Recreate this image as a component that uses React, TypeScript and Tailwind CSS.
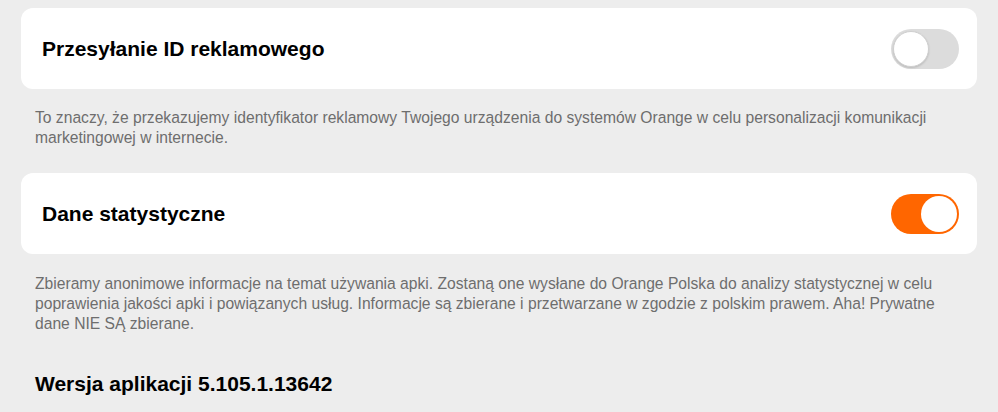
import React from "react"

function Toggle({ on }: { on: boolean }) {
  return on ? (
    <div className="flex h-[40px] w-[68px] items-center justify-end rounded-full bg-[#ff6600] p-[2px]">
      <div className="h-[36px] w-[36px] rounded-full bg-white" />
    </div>
  ) : (
    <div className="flex h-[40px] w-[68px] items-center rounded-full bg-[#dcdcdc] p-[2px]">
      <div className="h-[36px] w-[36px] rounded-full border border-[#cfcfcf] bg-white shadow-[0_1px_2px_rgba(0,0,0,0.15)]" />
    </div>
  )
}

function Row({ title, on }: { title: string; on: boolean }) {
  return (
    <div className="mx-[21px] flex h-[81px] items-center justify-between rounded-[12px] bg-white pl-[21px] pr-[18px]">
      <span className="text-[21px] font-bold text-black">{title}</span>
      <Toggle on={on} />
    </div>
  )
}

export default function App() {
  return (
    <div
      className="h-[412px] w-[998px] overflow-hidden bg-[#ededed] pt-[8px]"
      style={{ fontFamily: '"Liberation Sans", Arial, sans-serif' }}
    >
      <Row title="Przesyłanie ID reklamowego" on={false} />
      <p className="mx-[35px] mt-[19px] text-[15.65px] leading-[20px] text-[#6e6e6e]">
        To znaczy, że przekazujemy identyfikator reklamowy Twojego urządzenia do systemów Orange w celu personalizacji komunikacji
        marketingowej w internecie.
      </p>
      <div className="mt-[25px]">
        <Row title="Dane statystyczne" on={true} />
      </div>
      <p className="mx-[35px] mt-[20px] text-[15.65px] leading-[20px] text-[#6e6e6e]">
        Zbieramy anonimowe informacje na temat używania apki. Zostaną one wysłane do Orange Polska do analizy statystycznej w celu poprawienia jakości apki i powiązanych usług. Informacje są zbierane i przetwarzane w zgodzie z polskim prawem. Aha! Prywatne dane NIE SĄ zbierane.
      </p>
      <div className="mx-[35px] mt-[34px] text-[21px] font-bold text-black">Wersja aplikacji 5.105.1.13642</div>
    </div>
  )
}
